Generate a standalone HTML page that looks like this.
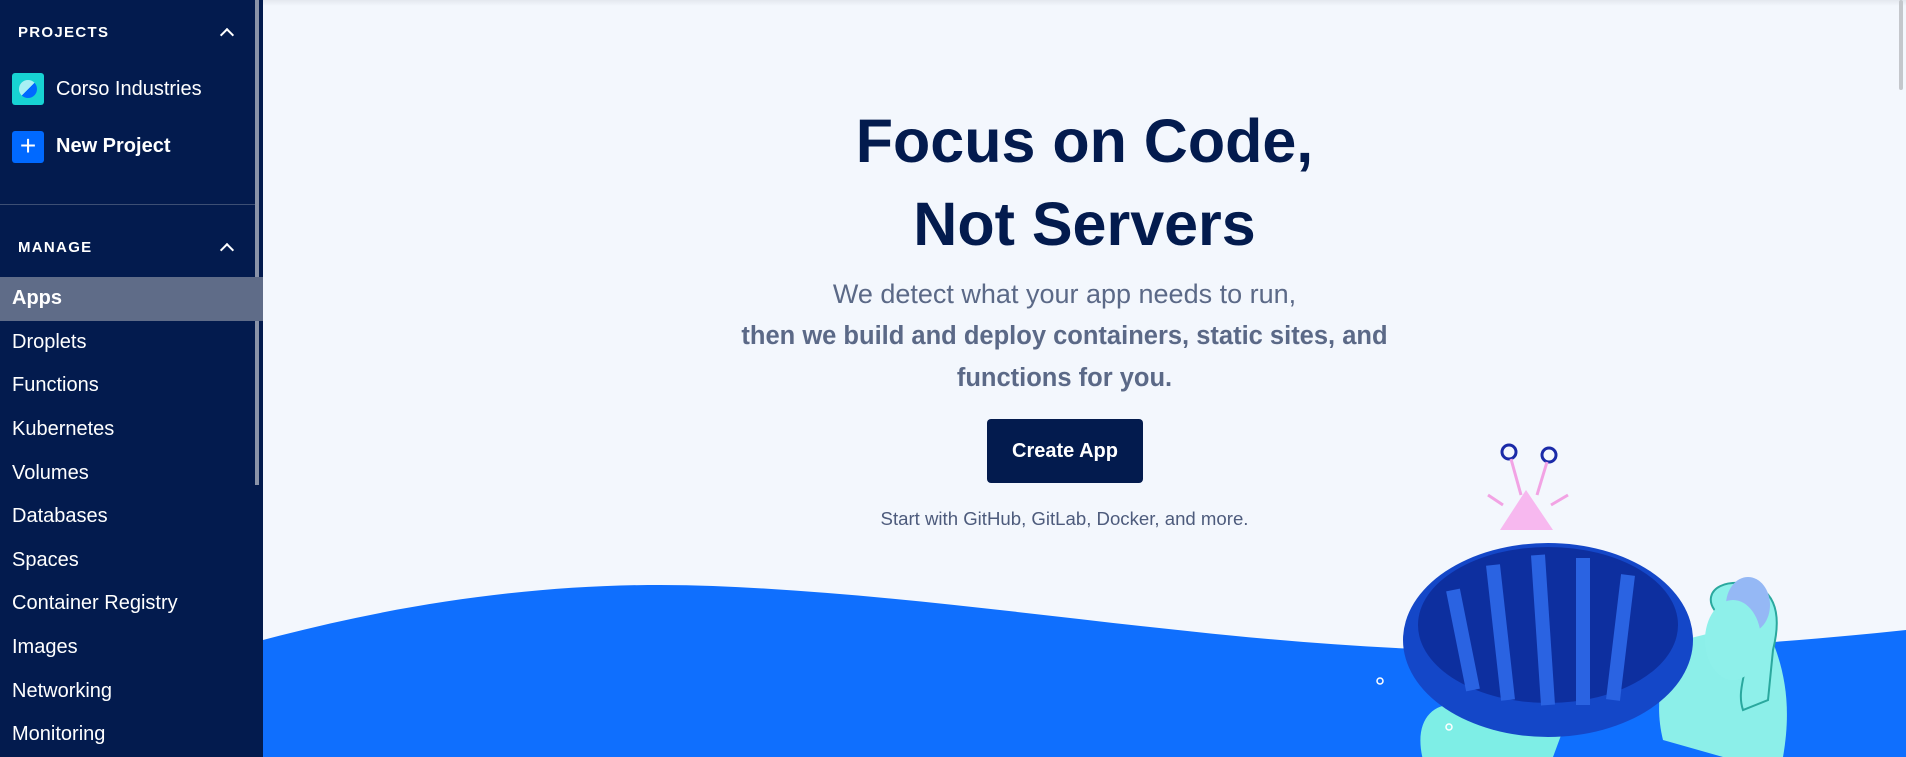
<!DOCTYPE html>
<html><head><meta charset="utf-8"><style>
*{margin:0;padding:0;box-sizing:border-box}
body{width:1906px;height:757px;overflow:hidden;font-family:"Liberation Sans",sans-serif;background:#f3f7fd;position:relative}
.side{position:absolute;left:0;top:0;width:263px;height:757px;background:#031b4e;color:#fff}
.sb{position:absolute;left:255px;top:0;width:4px;height:485px;background:#8a93a8}
.hd{position:absolute;left:18px;font-size:15px;font-weight:bold;letter-spacing:1.3px}
.car{position:absolute;left:222px;width:10px;height:10px;border-left:2px solid #fff;border-top:2px solid #fff;transform:rotate(45deg)}
.proj{position:absolute;left:12px;width:32px;height:32px;border-radius:3px}
.pt{position:absolute;left:56px;font-size:20px}
.item{position:absolute;left:12px;font-size:20px}
.main{position:absolute;left:263px;top:0;right:0;height:757px;text-align:center;color:#031b4e}
h1{position:absolute;left:0;right:0;top:100px;font-size:61px;line-height:83px;font-weight:bold}
.sub{position:absolute;left:0;right:40px;top:274px;font-size:27px;line-height:41px;color:#5b6987}
.sub b{font-size:25.5px}
.btn{position:absolute;left:724px;top:419px;width:156px;height:64px;background:#031b4e;border-radius:4px;color:#fff;font-size:20px;font-weight:bold;line-height:64px}
.st{position:absolute;left:0;right:40px;top:508px;font-size:18.6px;color:#4d5b7c}
</style></head><body>
<div class="side">
<div class="sb"></div>
<div class="hd" style="top:24px">PROJECTS</div><div class="car" style="top:30px"></div>
<div class="proj" style="top:73px;background:#17d3d3"><div style="position:absolute;left:7px;top:7px;width:18px;height:18px;border-radius:50%;background:linear-gradient(135deg,#a8f0f4 50%,#0069ff 50%)"></div></div>
<div class="pt" style="top:78px">Corso Industries</div>
<div class="proj" style="top:131px;background:#0069ff;color:#fff;font-size:28px;text-align:center;line-height:30px">+</div>
<div class="pt" style="top:135px;font-weight:bold">New Project</div>
<div style="position:absolute;left:0;top:204px;width:255px;height:1px;background:#3d4f74"></div>
<div class="hd" style="top:239px">MANAGE</div><div class="car" style="top:245px"></div>
<div style="position:absolute;left:0;top:277px;width:263px;height:44px;background:#5f6c88"></div>
<div class="item" style="top:287px;font-weight:bold">Apps</div>
<div class="item" style="top:331px">Droplets</div>
<div class="item" style="top:374px">Functions</div>
<div class="item" style="top:418px">Kubernetes</div>
<div class="item" style="top:462px">Volumes</div>
<div class="item" style="top:505px">Databases</div>
<div class="item" style="top:549px">Spaces</div>
<div class="item" style="top:592px">Container Registry</div>
<div class="item" style="top:636px">Images</div>
<div class="item" style="top:680px">Networking</div>
<div class="item" style="top:723px">Monitoring</div>
</div>
<div class="main">
<div style="position:absolute;left:0;right:0;top:0;height:6px;background:linear-gradient(#e4e8ef,#f3f7fd)"></div>
<div style="position:absolute;right:3px;top:0;width:4px;height:90px;background:#c4c7cc;border-radius:2px"></div>
<svg style="position:absolute;left:0;top:0" width="1643" height="757">
<path d="M0 640 C150 600 300 580 450 586 C700 596 950 645 1190 650 C1350 655 1500 645 1643 630 L1643 757 L0 757Z" fill="#0f6ffe"/>
<g>
<path d="M1160 760 C1150 720 1170 700 1200 705 L1260 700 L1300 730 L1290 757Z" fill="#7eeee6"/>
<path d="M1420 640 C1400 660 1390 700 1400 740 L1460 757 L1520 757 C1530 700 1520 660 1500 620Z" fill="#8cefe9"/>
<ellipse cx="1285" cy="640" rx="145" ry="97" fill="#1447c8"/>
<ellipse cx="1285" cy="625" rx="130" ry="78" fill="#0d2f9f"/>
<path d="M1190 590 L1210 690 M1230 565 L1245 700 M1275 555 L1285 705 M1320 558 L1320 705 M1365 575 L1350 700" stroke="#2a63e2" stroke-width="14"/>
<path d="M1465 620 C1440 610 1440 580 1480 583 C1510 586 1520 610 1510 650 L1505 700 L1480 710 C1470 680 1500 660 1465 620Z" fill="#8ef0ea" stroke="#2aa89e" stroke-width="2"/>
<ellipse cx="1485" cy="605" rx="22" ry="28" fill="#95b8f5"/>
<ellipse cx="1470" cy="640" rx="28" ry="40" fill="#8ef0ea"/>
<path d="M1237 530 L1263 490 L1290 530Z" fill="#f7b8ef"/>
<circle cx="1246" cy="452" r="7" fill="none" stroke="#1a2aa8" stroke-width="3"/>
<circle cx="1286" cy="455" r="7" fill="none" stroke="#1a2aa8" stroke-width="3"/>
<path d="M1248 459 L1258 495 M1284 462 L1274 495 M1240 505 L1225 495 M1288 505 L1305 495" stroke="#f2a3e4" stroke-width="3" fill="none"/>
<circle cx="1117" cy="681" r="3" fill="none" stroke="#fff" stroke-width="1.5"/>
<circle cx="1186" cy="727" r="3" fill="none" stroke="#fff" stroke-width="1.5"/>
</g>
</svg>
<h1>Focus on Code,<br>Not Servers</h1>
<div class="sub">We detect what your app needs to run,<br><b>then we build and deploy containers, static sites, and<br>functions for you.</b></div>
<div class="btn">Create App</div>
<div class="st">Start with GitHub, GitLab, Docker, and more.</div>
</div>
</body></html>
